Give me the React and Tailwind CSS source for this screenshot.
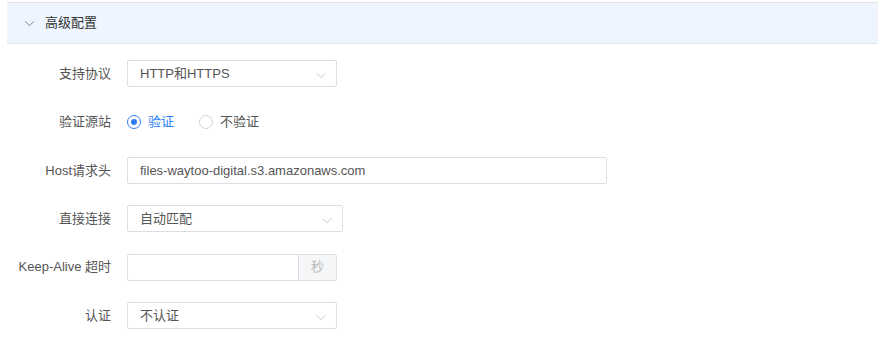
import React, { useState } from "react";

const font = { fontFamily: '"Liberation Sans", "Noto Sans CJK SC", sans-serif' };

const Chevron = ({ className = "" }) => (
  <svg viewBox="0 0 12 8" className={className} fill="none" stroke="currentColor" strokeWidth="1">
    <path d="M1 1.5 L6 6.5 L11 1.5" />
  </svg>
);

const Select = ({ value, width }) => (
  <div className={`relative flex h-[27px] items-center rounded-[2px] border border-[#dcdfe6] bg-white pl-[12px] text-[13px] text-[#555] ${width}`}>
    <span>{value}</span>
    <Chevron className="absolute right-[9px] top-[11px] h-[7px] w-[12px] text-[#bfc3c9]" />
  </div>
);

const Row = ({ label, children }) => (
  <div className="flex h-[27px] items-center">
    <div className="w-[111px] shrink-0 text-right text-[13px] text-[#555]">{label}</div>
    <div className="ml-[16px] flex items-center">{children}</div>
  </div>
);

const App = () => {
  const [verify, setVerify] = useState(true);

  return (
    <div className="h-[350px] w-[882px] bg-white pt-[2px]" style={font}>
      {/* Header */}
      <div className="ml-[7px] mr-[4px] flex h-[42px] items-center border-y border-[#e1e4e8] bg-[#eef5fe] pl-[17px]">
        <Chevron className="h-[7px] w-[11px] text-[#777]" />
        <span className="ml-[10px] text-[13px] text-[#333]">高级配置</span>
      </div>

      {/* Form */}
      <div className="mt-[16px] flex flex-col gap-y-[21.4px]">
        <Row label="支持协议">
          <Select value="HTTP和HTTPS" width="w-[210px]" />
        </Row>

        <Row label="验证源站">
          <label className="flex cursor-pointer items-center" onClick={() => setVerify(true)}>
            <span className={`flex h-[14px] w-[14px] items-center justify-center rounded-full border ${verify ? "border-[#2d7ff9]" : "border-[#d0d3d8]"}`}>
              {verify && <span className="h-[6px] w-[6px] rounded-full bg-[#2d7ff9]" />}
            </span>
            <span className={`ml-[7px] text-[13px] ${verify ? "text-[#2d7ff9]" : "text-[#555]"}`}>验证</span>
          </label>
          <label className="ml-[25px] flex cursor-pointer items-center" onClick={() => setVerify(false)}>
            <span className={`flex h-[14px] w-[14px] items-center justify-center rounded-full border ${!verify ? "border-[#2d7ff9]" : "border-[#d0d3d8]"}`}>
              {!verify && <span className="h-[6px] w-[6px] rounded-full bg-[#2d7ff9]" />}
            </span>
            <span className={`ml-[7px] text-[13px] ${!verify ? "text-[#2d7ff9]" : "text-[#555]"}`}>不验证</span>
          </label>
        </Row>

        <Row label="Host请求头">
          <input
            defaultValue="files-waytoo-digital.s3.amazonaws.com"
            className="h-[27px] w-[480px] rounded-[2px] border border-[#dcdfe6] px-[12px] text-[13px] text-[#555] outline-none"
          />
        </Row>

        <Row label="直接连接">
          <Select value="自动匹配" width="w-[216px]" />
        </Row>

        <Row label="Keep-Alive 超时">
          <div className="flex h-[27px] w-[210px] rounded-[2px] border border-[#dcdfe6]">
            <input className="min-w-0 flex-1 px-[12px] text-[13px] text-[#555] outline-none" />
            <div className="flex w-[38px] items-center justify-center border-l border-[#dcdfe6] bg-[#f5f6f7] text-[13px] text-[#bbb]">秒</div>
          </div>
        </Row>

        <Row label="认证">
          <Select value="不认证" width="w-[210px]" />
        </Row>
      </div>
    </div>
  );
};

export default App;
